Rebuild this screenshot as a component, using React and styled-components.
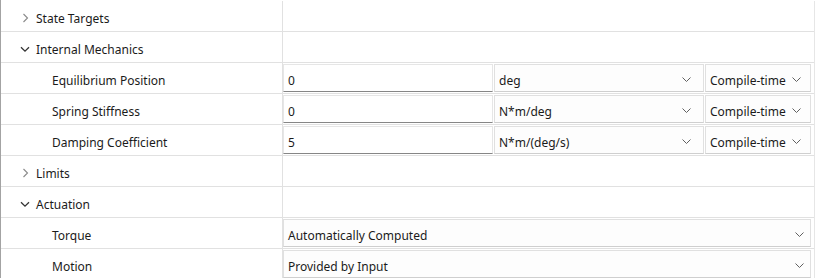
import React from "react";
import styled, { createGlobalStyle } from "styled-components";

const Global = createGlobalStyle`
  html, body { margin: 0; padding: 0; background: #ffffff; }
  body { font-family: "Noto Sans", "Open Sans", sans-serif; font-size: 12px; color: #1b1b1b; }
`;

const Frame = styled.div`
  width: 816px;
  height: 278px;
  box-sizing: border-box;
  border-left: 1px solid #a3a3a3;
  padding-right: 1px;
  padding-top: 1px;
  overflow: hidden;
  display: flex;
`;

const Table = styled.div`
  flex: 1;
  display: flex;
  flex-direction: column;
  border-right: 1px solid #e6e6e6;
  padding-right: 2px;
`;

const Row = styled.div`
  display: grid;
  grid-template-columns: 282px 1fr;
  height: 31px;
  flex: none;
  box-sizing: border-box;
  border-bottom: 1px solid #e1e1e1;
  margin-right: -2px;
`;

const LabelCell = styled.div`
  display: flex;
  align-items: center;
  padding-left: ${(p) => (p.$child ? 51 : 19)}px;
  padding-top: 5px;
  border-right: 1px solid #e1e1e1;
  gap: 6px;
  white-space: nowrap;
`;

const Chevron = styled.svg`
  width: 10px;
  height: 10px;
  flex: none;
  margin-top: -2px;
`;

const ValueCell = styled.div`
  display: grid;
  grid-template-columns: ${(p) => p.$cols || "1fr"};
  gap: 1px;
  padding: 1px 3px 1px 0;
  align-items: stretch;
`;

const TextInput = styled.div`
  display: flex;
  align-items: center;
  padding-left: 4px;
  padding-top: 4px;
  background: #ffffff;
  border: 1px solid #e6e6e6;
  border-bottom: 1px solid #868686;
`;

const Select = styled.div`
  display: flex;
  align-items: center;
  justify-content: space-between;
  padding: 0 ${(p) => p.$arrowGap}px 0 4px;
  background: #fdfdfd;
  border: 1px solid #e0e0e0;
  border-bottom-color: #cfcfcf;
  white-space: nowrap;
  overflow: hidden;
`;

const SelectText = styled.span`
  padding-top: 4px;
`;

const Arrow = styled.svg`
  flex: none;
  margin-top: 2px;
`;

const Expand = ({ open }) =>
  open ? (
    <Chevron viewBox="0 0 10 10">
      <path d="M1 3.2 L5 7.2 L9 3.2" fill="none" stroke="#333333" strokeWidth="1.3" />
    </Chevron>
  ) : (
    <Chevron viewBox="0 0 10 10">
      <path d="M3.5 1 L7.5 5 L3.5 9" fill="none" stroke="#8a8a8a" strokeWidth="1.1" />
    </Chevron>
  );

const DropArrow = () => (
  <Arrow width="9" height="5" viewBox="0 0 9 5">
    <path d="M0.5 0.5 L4.5 4.5 L8.5 0.5" fill="none" stroke="#606060" strokeWidth="1" />
  </Arrow>
);

const Dropdown = ({ children, gap = 6 }) => (
  <Select $arrowGap={gap}>
    <SelectText>{children}</SelectText>
    <DropArrow />
  </Select>
);

const Section = ({ label, open }) => (
  <Row>
    <LabelCell>
      <Expand open={open} />
      {label}
    </LabelCell>
    <ValueCell />
  </Row>
);

const Param = ({ label, value, unit }) => (
  <Row>
    <LabelCell $child>{label}</LabelCell>
    <ValueCell $cols="1fr 1fr 106px">
      <TextInput>{value}</TextInput>
      <Dropdown gap={12}>{unit}</Dropdown>
      <Dropdown gap={9}>Compile-time</Dropdown>
    </ValueCell>
  </Row>
);

const Choice = ({ label, value }) => (
  <Row>
    <LabelCell $child>{label}</LabelCell>
    <ValueCell>
      <Dropdown gap={6}>{value}</Dropdown>
    </ValueCell>
  </Row>
);

export default function App() {
  return (
    <>
      <Global />
      <Frame>
        <Table>
          <Section label="State Targets" />
          <Section label="Internal Mechanics" open />
          <Param label="Equilibrium Position" value="0" unit="deg" />
          <Param label="Spring Stiffness" value="0" unit="N*m/deg" />
          <Param label="Damping Coefficient" value="5" unit="N*m/(deg/s)" />
          <Section label="Limits" />
          <Section label="Actuation" open />
          <Choice label="Torque" value="Automatically Computed" />
          <Choice label="Motion" value="Provided by Input" />
        </Table>
      </Frame>
    </>
  );
}
